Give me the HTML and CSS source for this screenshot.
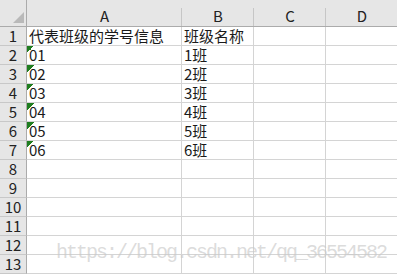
FILE: index.html
```html
<!DOCTYPE html>
<html>
<head>
<meta charset="utf-8">
<link rel="stylesheet" href="styles.css">
</head>
<body>
<div class="sheet">
  <div class="grid">
    <div class="corner"><svg width="27" height="27" viewBox="0 0 27 27"><polygon points="24,12 24,23 13,23" fill="#b9b9b9"/></svg></div>
    <div class="ch">A</div><div class="ch">B</div><div class="ch">C</div><div class="ch last">D</div>

    <div class="rh">1</div><div class="c">代表班级的学号信息</div><div class="c">班级名称</div><div class="c"></div><div class="c"></div>
    <div class="rh">2</div><div class="c t">01</div><div class="c">1班</div><div class="c"></div><div class="c"></div>
    <div class="rh">3</div><div class="c t">02</div><div class="c">2班</div><div class="c"></div><div class="c"></div>
    <div class="rh">4</div><div class="c t">03</div><div class="c">3班</div><div class="c"></div><div class="c"></div>
    <div class="rh">5</div><div class="c t">04</div><div class="c">4班</div><div class="c"></div><div class="c"></div>
    <div class="rh">6</div><div class="c t">05</div><div class="c">5班</div><div class="c"></div><div class="c"></div>
    <div class="rh">7</div><div class="c t">06</div><div class="c">6班</div><div class="c"></div><div class="c"></div>
    <div class="rh">8</div><div class="c"></div><div class="c"></div><div class="c"></div><div class="c"></div>
    <div class="rh">9</div><div class="c"></div><div class="c"></div><div class="c"></div><div class="c"></div>
    <div class="rh">10</div><div class="c"></div><div class="c"></div><div class="c"></div><div class="c"></div>
    <div class="rh">11</div><div class="c"></div><div class="c"></div><div class="c"></div><div class="c"></div>
    <div class="rh">12</div><div class="c"></div><div class="c"></div><div class="c"></div><div class="c"></div>
    <div class="rh">13</div><div class="c"></div><div class="c"></div><div class="c"></div><div class="c"></div>
  </div>
  <div class="watermark">https://blog.csdn.net/qq_36554582</div>
</div>
</body>
</html>
```
FILE: styles.css
```css
html, body {
  margin: 0;
  padding: 0;
  background: #ffffff;
}
.sheet {
  position: relative;
  width: 397px;
  height: 274px;
  overflow: hidden;
  font-family: "Noto Sans CJK SC", "Noto Sans", sans-serif;
  font-size: 15px;
  color: #1a1a1a;
}
.grid {
  display: grid;
  grid-template-columns: 27px 155px 72px 72px 72px;
  grid-template-rows: 27px repeat(13, 19px);
}
.grid > div {
  box-sizing: border-box;
}
.corner {
  background: #e6e6e6;
  border-right: 1px solid #ababab;
  border-bottom: 1px solid #ababab;
  line-height: 0;
}
.corner svg {
  display: block;
}
.ch {
  background: linear-gradient(#c6c6c6, #c6c6c6) right bottom / 1px 18px no-repeat, #e6e6e6;
  border-bottom: 1px solid #ababab;
  text-align: center;
  line-height: 18px;
  padding-top: 7px;
  color: #222;
}
.ch.last {
  background: #e6e6e6;
}
.rh {
  background: #e6e6e6;
  border-right: 1px solid #ababab;
  border-bottom: 1px solid #c8c8c8;
  text-align: center;
  line-height: 18px;
  color: #222;
}
.c {
  border-right: 1px solid #d4d4d4;
  border-bottom: 1px solid #d4d4d4;
  padding-left: 2px;
  line-height: 18px;
  white-space: nowrap;
  overflow: visible;
}
.c.t {
  background: linear-gradient(135deg, #1f7d1f 0 50%, transparent 50%) left top / 7px 7px no-repeat;
}
.watermark {
  position: absolute;
  left: 56px;
  top: 241px;
  font-family: "Liberation Mono", monospace;
  font-size: 20px;
  letter-spacing: -2px;
  line-height: 24px;
  color: rgba(200, 200, 200, 0.65);
  white-space: nowrap;
  pointer-events: none;
}
```
